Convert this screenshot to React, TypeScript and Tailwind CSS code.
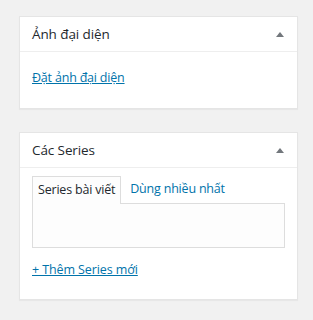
import { ReactNode } from 'react';

const font = { fontFamily: '"Open Sans", "Noto Sans", sans-serif' };

const Arrow = () => (
  <svg width="8" height="5" viewBox="0 0 8 5" className="fill-[#72777c]">
    <path d="M4 0 L8 5 L0 5 Z" />
  </svg>
);

interface BoxProps {
  title: string;
  children: ReactNode;
}

const MetaBox = ({ title, children }: BoxProps) => (
  <div className="bg-white border border-[#e5e5e5] shadow-[0_1px_1px_rgba(0,0,0,0.04)]">
    <div className="h-[35px] flex items-center justify-between pl-3 pr-[13px] border-b border-[#eee]">
      <h2 className="text-[13.5px] tracking-[-0.1px] text-[#23282d] font-normal">{title}</h2>
      <Arrow />
    </div>
    {children}
  </div>
);

export default function App() {
  return (
    <div className="w-[313px] h-[320px] bg-[#f1f1f1] pt-[16px] pl-[19px] pr-[15px]" style={font}>
      <div className="flex flex-col gap-[23px]">
        <MetaBox title="Ảnh đại diện">
          <div className="px-3 pt-[12px] pb-[20px]">
            <a href="#" className="text-[12.5px] tracking-[-0.2px] leading-[20px] text-[#0073aa] underline">
              Đặt ảnh đại diện
            </a>
          </div>
        </MetaBox>

        <MetaBox title="Các Series">
          <div className="px-3 pt-[8px] pb-[19px]">
            <div className="flex items-end">
              <div className="h-[28px] px-[5px] flex items-center border border-b-0 border-[#ddd] bg-[#fdfdfd] text-[12.5px] tracking-[-0.2px] text-[#23282d] -mb-px relative z-10">
                Series bài viết
              </div>
              <a href="#" className="h-[27px] px-[9px] flex items-center text-[12.5px] tracking-[-0.2px] text-[#0073aa]">
                Dùng nhiều nhất
              </a>
            </div>
            <div className="h-[45px] border border-[#ddd] bg-[#fdfdfd]" />
            <div className="mt-[8px]">
              <a href="#" className="text-[12.5px] tracking-[-0.1px] leading-[20px] text-[#0073aa] underline font-medium">
                + Thêm Series mới
              </a>
            </div>
          </div>
        </MetaBox>
      </div>
    </div>
  );
}
